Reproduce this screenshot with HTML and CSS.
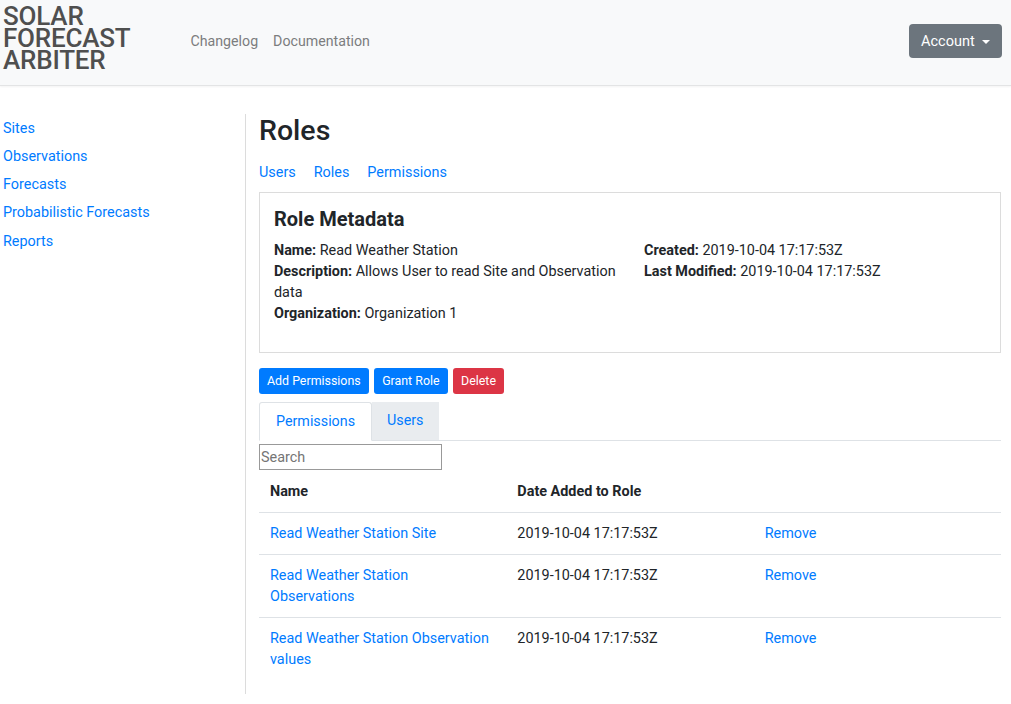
FILE: index.html
```html
<!DOCTYPE html>
<html>
<head>
<meta charset="utf-8">
<title>Roles</title>
<link rel="stylesheet" href="styles.css">
</head>
<body>
<header class="topbar">
  <a class="brand" href="#">SOLAR<br>FORECAST<br>ARBITER</a>
  <nav class="topnav">
    <a href="#">Changelog</a>
    <a href="#">Documentation</a>
  </nav>
  <button class="account-btn">Account <span class="caret"></span></button>
</header>
<div class="layout">
  <aside class="sidebar">
    <a href="#">Sites</a>
    <a href="#">Observations</a>
    <a href="#">Forecasts</a>
    <a href="#">Probabilistic Forecasts</a>
    <a href="#">Reports</a>
  </aside>
  <main class="main">
    <h1 class="page-title">Roles</h1>
    <nav class="subnav">
      <a href="#">Users</a>
      <a href="#">Roles</a>
      <a href="#">Permissions</a>
    </nav>
    <section class="card">
      <h2 class="card-title">Role Metadata</h2>
      <div class="meta">
        <div class="meta-col">
          <div><b>Name:</b> Read Weather Station</div>
          <div><b>Description:</b> Allows User to read Site and Observation data</div>
          <div><b>Organization:</b> Organization 1</div>
        </div>
        <div class="meta-col">
          <div><b>Created:</b> 2019-10-04 17:17:53Z</div>
          <div><b>Last Modified:</b> 2019-10-04 17:17:53Z</div>
        </div>
      </div>
    </section>
    <div class="actions">
      <button class="btn btn-primary">Add Permissions</button>
      <button class="btn btn-primary">Grant Role</button>
      <button class="btn btn-danger">Delete</button>
    </div>
    <div class="tabs">
      <a class="tab active" href="#">Permissions</a>
      <a class="tab" href="#">Users</a>
    </div>
    <input class="search" type="text" placeholder="Search">
    <table class="table">
      <thead>
        <tr><th>Name</th><th>Date Added to Role</th><th></th></tr>
      </thead>
      <tbody>
        <tr><td><a href="#">Read Weather Station Site</a></td><td>2019-10-04 17:17:53Z</td><td><a href="#">Remove</a></td></tr>
        <tr><td><a href="#">Read Weather Station Observations</a></td><td>2019-10-04 17:17:53Z</td><td><a href="#">Remove</a></td></tr>
        <tr><td><a href="#">Read Weather Station Observation values</a></td><td>2019-10-04 17:17:53Z</td><td><a href="#">Remove</a></td></tr>
      </tbody>
    </table>
  </main>
</div>
</body>
</html>
```
FILE: styles.css
```css
* { box-sizing: border-box; }
body {
  margin: 0;
  font-family: Roboto, "Liberation Sans", sans-serif;
  font-size: 14.4px;
  line-height: 21px;
  color: #212529;
  background: #fff;
}
a { color: #007bff; text-decoration: none; }

.topbar {
  height: 86px;
  background: #f8f9fa;
  border-bottom: 1px solid #e3e4e5;
  box-shadow: 0 1px 2px rgba(0,0,0,0.05);
  display: flex;
  align-items: center;
  padding: 0 9px 0 3px;
}
.brand {
  align-self: flex-start;
  margin-top: 5px;
  font-size: 26px;
  line-height: 22px;
  font-weight: 500;
  color: #4f4f4f;
  letter-spacing: -0.2px;
}
.topnav {
  display: flex;
  gap: 15px;
  margin-left: 60px;
  margin-top: -2px;
}
.topnav a { color: #7c7d7e; font-size: 14.2px; }
.account-btn {
  margin-left: auto;
  margin-top: -3px;
  height: 34px;
  width: 93px;
  background: #6c757d;
  color: #fff;
  border: none;
  border-radius: 4px;
  font-family: inherit;
  font-size: 14.5px;
  padding: 1px 12px 0;
  display: flex;
  align-items: center;
  gap: 7px;
}
.caret {
  width: 0; height: 0;
  border-left: 4px solid transparent;
  border-right: 4px solid transparent;
  border-top: 4.5px solid #fff;
}

.layout {
  display: flex;
  margin-top: 28px;
}
.sidebar {
  width: 246px;
  flex: none;
  border-right: 1px solid #dcdcdc;
  display: flex;
  flex-direction: column;
  padding-left: 3px;
  padding-top: 0.5px;
  margin-top: 0;
}
.sidebar a { line-height: 28.25px; display: block; width: max-content; }

.main {
  flex: 1;
  padding: 0 10px 14px 13px;
}
.page-title {
  margin: 0;
  font-size: 28.5px;
  font-weight: 500;
  line-height: 34px;
  color: #212529;
}
.subnav {
  display: flex;
  gap: 18px;
  padding: 14px 0 9px;
}
.card {
  border: 1px solid #dcdcdc;
  padding: 14px 14px 28px;
}
.card-title {
  margin: 0 0 9px;
  font-size: 20px;
  line-height: 24px;
  font-weight: 700;
}
.meta {
  display: grid;
  grid-template-columns: 370px 1fr;
}
.meta-col:first-child { padding-right: 14px; }
.meta b { font-weight: 700; }

.actions {
  display: flex;
  gap: 5.5px;
  margin-top: 15px;
}
.btn {
  font-family: inherit;
  font-size: 12.4px;
  line-height: 18px;
  padding: 4px 8px;
  border: none;
  border-radius: 3px;
  color: #fff;
}
.btn-primary { background: #007bff; }
.btn-danger { background: #dc3545; }

.tabs {
  display: flex;
  margin-top: 8px;
  border-bottom: 1px solid #dee2e6;
  height: 39px;
}
.tab {
  padding: 0 15px;
  line-height: 37px;
  font-size: 14.3px;
  margin-bottom: -1px;
}
.tab.active {
  background: #fff;
  border: 1px solid #dee2e6;
  border-bottom-color: #fff;
  border-radius: 3px 3px 0 0;
  line-height: 37px;
  padding: 0 16px;
}
.tab:not(.active) {
  background: #e9ecef;
  height: 38px;
}
.search {
  display: block;
  margin-top: 3px;
  width: 183px;
  height: 26px;
  border: 1px solid #999;
  padding: 1px 1px;
  font-family: inherit;
  font-size: 14.4px;
  color: #212529;
}
.search::placeholder { color: #757575; }

.table {
  width: 100%;
  table-layout: fixed;
  border-collapse: collapse;
  margin-top: 1px;
}
.table th, .table td {
  padding: 10px 11px;
  text-align: left;
  vertical-align: top;
}
.table th { font-weight: 700; }
.table tbody tr { border-top: 1px solid #dee2e6; }
```
